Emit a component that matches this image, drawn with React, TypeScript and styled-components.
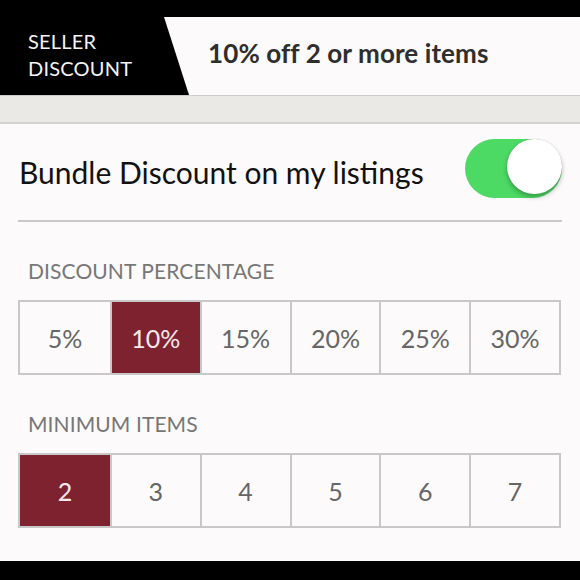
import React, { useState } from 'react';
import styled, { createGlobalStyle } from 'styled-components';

const GlobalStyle = createGlobalStyle`
  html, body {
    margin: 0;
    padding: 0;
    background: #000;
  }
  body {
    font-family: Lato, "Open Sans", "Liberation Sans", sans-serif;
  }
`;

const Screen = styled.div`
  width: 580px;
  height: 580px;
  padding: 17px 0 19px;
  box-sizing: border-box;
  display: flex;
  flex-direction: column;
  background: #000;
  overflow: hidden;
`;

const Header = styled.header`
  height: 78px;
  display: flex;
  align-items: center;
  background: #fcfafa;
`;

const Badge = styled.div`
  width: 189px;
  height: 100%;
  box-sizing: border-box;
  padding: 0 0 2px 28px;
  display: flex;
  flex-direction: column;
  justify-content: center;
  background: #000;
  color: #f4f4f4;
  font-size: 20px;
  line-height: 27px;
  letter-spacing: 0.2px;
  clip-path: polygon(0 0, 164px 0, 100% 100%, 0 100%);
`;

const Title = styled.h1`
  margin: 0 0 6px 19px;
  font-size: 26px;
  font-weight: 700;
  color: #2e2e2e;
  letter-spacing: 0.1px;
`;

const Band = styled.div`
  height: 26px;
  background: #ebe9e5;
  border-top: 1px solid #cfcdca;
  border-bottom: 2px solid #d4d2cf;
`;

const Content = styled.main`
  flex: 1;
  background: #fcfafa;
  padding: 0 18px;
`;

const Row = styled.div`
  display: flex;
  align-items: center;
  justify-content: space-between;
  padding: 15px 0 22px 1px;
  border-bottom: 2px solid #c9c9c9;
`;

const RowLabel = styled.span`
  font-size: 30px;
  color: #111;
  padding-top: 6px;
`;

const Track = styled.button<{ $on: boolean }>`
  width: 97px;
  height: 59px;
  border: none;
  padding: 0;
  border-radius: 30px;
  display: flex;
  align-items: flex-start;
  justify-content: ${(p) => (p.$on ? 'flex-end' : 'flex-start')};
  background: ${(p) => (p.$on ? '#4cd964' : '#e5e5e5')};
  cursor: pointer;
`;

const Knob = styled.span`
  width: 55px;
  height: 55px;
  border-radius: 50%;
  background: #fff;
  box-shadow: 0 3px 5px rgba(0, 0, 0, 0.28), 0 0 1px rgba(0, 0, 0, 0.2);
`;

const SectionLabel = styled.div`
  margin: 37px 0 17px 10px;
  font-size: 21px;
  line-height: 24px;
  color: #777;
  letter-spacing: 0.1px;
`;

const Options = styled.div`
  display: grid;
  grid-template-columns: repeat(6, 1fr);
  border: 2px solid #c8c8c8;
  margin-right: 1px;
`;

const Option = styled.button<{ $active: boolean }>`
  height: 71px;
  border: none;
  border-left: 2px solid #c8c8c8;
  padding: 0;
  font-family: inherit;
  font-size: 25px;
  color: ${(p) => (p.$active ? '#f3e9ea' : '#666')};
  background: ${(p) => (p.$active ? '#7f2230' : '#fcfafa')};
  cursor: pointer;

  &:first-child {
    border-left: none;
  }
`;

const percents = [5, 10, 15, 20, 25, 30];
const counts = [2, 3, 4, 5, 6, 7];

export default function App() {
  const [on, setOn] = useState(true);
  const [percent, setPercent] = useState(10);
  const [count, setCount] = useState(2);

  return (
    <>
      <GlobalStyle />
      <Screen>
        <Header>
          <Badge>
            <span>SELLER</span>
            <span>DISCOUNT</span>
          </Badge>
          <Title>
            {percent}% off {count} or more items
          </Title>
        </Header>
        <Band />
        <Content>
          <Row>
            <RowLabel>Bundle Discount on my listings</RowLabel>
            <Track $on={on} onClick={() => setOn(!on)} aria-pressed={on}>
              <Knob />
            </Track>
          </Row>
          <SectionLabel>DISCOUNT PERCENTAGE</SectionLabel>
          <Options>
            {percents.map((p) => (
              <Option key={p} $active={p === percent} onClick={() => setPercent(p)}>
                {p}%
              </Option>
            ))}
          </Options>
          <SectionLabel>MINIMUM ITEMS</SectionLabel>
          <Options>
            {counts.map((c) => (
              <Option key={c} $active={c === count} onClick={() => setCount(c)}>
                {c}
              </Option>
            ))}
          </Options>
        </Content>
      </Screen>
    </>
  );
}
